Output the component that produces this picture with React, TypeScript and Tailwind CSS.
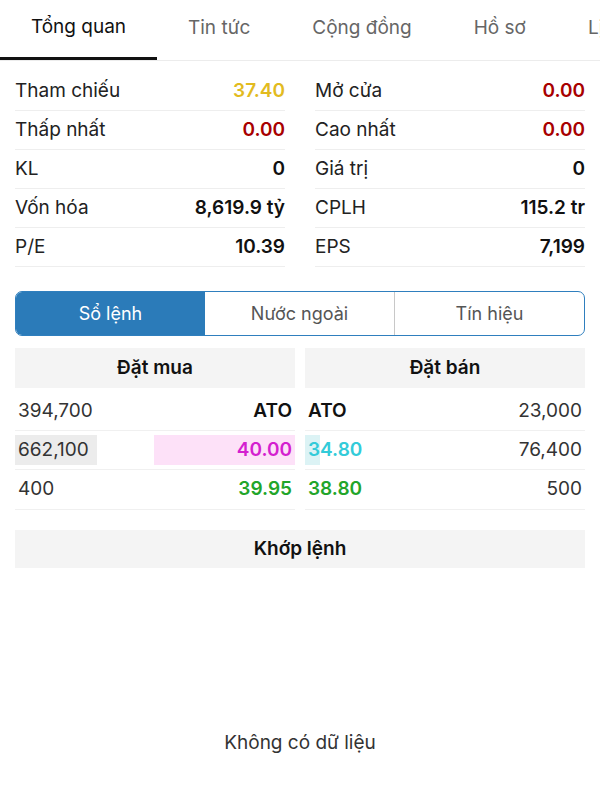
import React from "react";

const tabs = ["Tổng quan", "Tin tức", "Cộng đồng", "Hồ sơ", "Lịch sử"];

const stats: [string, string, string][] = [
  ["Tham chiếu", "37.40", "text-[#e2bb1f]"],
  ["Mở cửa", "0.00", "text-[#a80000]"],
  ["Thấp nhất", "0.00", "text-[#a80000]"],
  ["Cao nhất", "0.00", "text-[#a80000]"],
  ["KL", "0", "text-[#111]"],
  ["Giá trị", "0", "text-[#111]"],
  ["Vốn hóa", "8,619.9 tỷ", "text-[#111]"],
  ["CPLH", "115.2 tr", "text-[#111]"],
  ["P/E", "10.39", "text-[#111]"],
  ["EPS", "7,199", "text-[#111]"],
];

export default function App() {
  return (
    <div
      className="w-[600px] h-[800px] bg-white overflow-hidden text-[#222] flex flex-col"
      style={{ fontFamily: "Inter, 'Noto Sans', sans-serif" }}
    >
      {/* top tabs */}
      <div className="flex h-[61px] border-b border-[#ececec] whitespace-nowrap overflow-hidden shrink-0">
        {tabs.map((t, i) => (
          <div
            key={t}
            className={
              i === 0
                ? "w-[157px] justify-center h-full flex items-center pb-[3px] text-[19px] text-[#111] border-b-[3px] border-[#111] shrink-0"
                : "px-[31px] h-full flex items-center pb-[3px] text-[19px] text-[#666] shrink-0"
            }
          >
            {t}
          </div>
        ))}
      </div>

      <div className="px-[15px] flex flex-col">
        {/* stats */}
        <div className="grid grid-cols-2 gap-x-[30px] mt-[11px]">
          {stats.map(([label, value, color]) => (
            <div
              key={label}
              className="h-[39px] flex items-center justify-between border-b border-[#eeeeee] text-[19px]"
            >
              <span className="text-[#222]">{label}</span>
              <span className={"font-semibold " + color}>{value}</span>
            </div>
          ))}
        </div>

        {/* segmented control */}
        <div className="mt-[24px] h-[45px] flex border border-[#2f7fbe] rounded-[7px] overflow-hidden text-[18px]">
          <div className="flex-1 flex items-center justify-center bg-[#2b7bb9] text-white">
            Sổ lệnh
          </div>
          <div className="flex-1 flex items-center justify-center text-[#555] border-r border-[#c8c8c8]">
            Nước ngoài
          </div>
          <div className="flex-1 flex items-center justify-center text-[#555]">
            Tín hiệu
          </div>
        </div>

        {/* order book */}
        <div className="grid grid-cols-2 gap-x-[10px] mt-[12px]">
          <div className="h-[40px] bg-[#f4f4f4] flex items-center justify-center font-semibold text-[19px] text-[#111]">
            Đặt mua
          </div>
          <div className="h-[40px] bg-[#f4f4f4] flex items-center justify-center font-semibold text-[19px] text-[#111]">
            Đặt bán
          </div>
        </div>

        <div className="grid grid-cols-2 gap-x-[10px] mt-[4px] text-[19px]">
          {/* row 1 */}
          <div className="h-[39px] flex items-center justify-between border-b border-[#f0f0f0] px-[3px]">
            <span className="text-[#333]">394,700</span>
            <span className="font-semibold text-[#111]">ATO</span>
          </div>
          <div className="h-[39px] flex items-center justify-between border-b border-[#f0f0f0] px-[3px]">
            <span className="font-semibold text-[#111]">ATO</span>
            <span className="text-[#333]">23,000</span>
          </div>
          {/* row 2 */}
          <div className="h-[39px] flex items-stretch justify-between border-b border-[#f0f0f0] py-[4px]">
            <span className="bg-[#ececec] px-[3px] w-[82px] flex items-center text-[#333]">662,100</span>
            <span className="bg-[#fde1f8] w-[141px] flex items-center justify-end pr-[3px] font-semibold text-[#d41fcf]">
              40.00
            </span>
          </div>
          <div className="h-[39px] flex items-stretch justify-between border-b border-[#f0f0f0] py-[4px] relative">
            <span className="absolute left-0 top-[4px] bottom-[4px] w-[15px] bg-[#dcf3f5]" />
            <span className="relative flex items-center pl-[3px] font-semibold text-[#33cbd9]">34.80</span>
            <span className="flex items-center pr-[3px] text-[#333]">76,400</span>
          </div>
          {/* row 3 */}
          <div className="h-[40px] flex items-center justify-between border-b border-[#f0f0f0] px-[3px]">
            <span className="text-[#333]">400</span>
            <span className="font-semibold text-[#22a52a]">39.95</span>
          </div>
          <div className="h-[40px] flex items-center justify-between border-b border-[#f0f0f0] px-[3px]">
            <span className="font-semibold text-[#22a52a]">38.80</span>
            <span className="text-[#333]">500</span>
          </div>
        </div>

        {/* matched orders */}
        <div className="mt-[20px] h-[38px] bg-[#f4f4f4] flex items-center justify-center font-semibold text-[19px] text-[#111]">
          Khớp lệnh
        </div>

        <div className="mt-[160px] h-[30px] flex items-center justify-center text-[19px] text-[#333]">
          Không có dữ liệu
        </div>
      </div>
    </div>
  );
}
